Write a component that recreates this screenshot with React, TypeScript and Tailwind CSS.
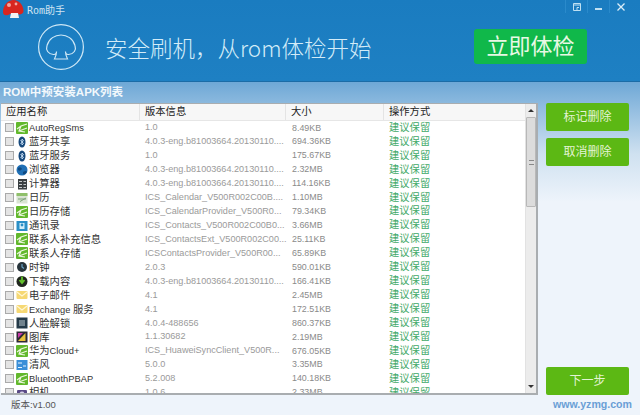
import React from "react";

type IconName =
  | "android"
  | "bluetooth"
  | "globe"
  | "calc"
  | "calendar"
  | "contacts"
  | "clock"
  | "download"
  | "mail"
  | "face"
  | "gallery"
  | "weather"
  | "camera";

interface Row {
  name: string;
  version: string;
  size: string;
  icon: IconName;
}

const rows: Row[] = [
  { name: "AutoRegSms", version: "1.0", size: "8.49KB", icon: "android" },
  { name: "蓝牙共享", version: "4.0.3-eng.b81003664.20130110....", size: "694.36KB", icon: "bluetooth" },
  { name: "蓝牙服务", version: "1.0", size: "175.67KB", icon: "bluetooth" },
  { name: "浏览器", version: "4.0.3-eng.b81003664.20130110....", size: "2.32MB", icon: "globe" },
  { name: "计算器", version: "4.0.3-eng.b81003664.20130110....", size: "114.16KB", icon: "calc" },
  { name: "日历", version: "ICS_Calendar_V500R002C00B....", size: "1.10MB", icon: "calendar" },
  { name: "日历存储", version: "ICS_CalendarProvider_V500R0...", size: "79.34KB", icon: "android" },
  { name: "通讯录", version: "ICS_Contacts_V500R002C00B0...", size: "3.66MB", icon: "contacts" },
  { name: "联系人补充信息", version: "ICS_ContactsExt_V500R002C00...", size: "25.11KB", icon: "android" },
  { name: "联系人存储", version: "ICSContactsProvider_V500R00...", size: "65.89KB", icon: "android" },
  { name: "时钟", version: "2.0.3", size: "590.01KB", icon: "clock" },
  { name: "下载内容", version: "4.0.3-eng.b81003664.20130110....", size: "166.41KB", icon: "download" },
  { name: "电子邮件", version: "4.1", size: "2.45MB", icon: "mail" },
  { name: "Exchange 服务", version: "4.1", size: "172.51KB", icon: "mail" },
  { name: "人脸解锁", version: "4.0.4-488656", size: "860.37KB", icon: "face" },
  { name: "图库", version: "1.1.30682", size: "2.19MB", icon: "gallery" },
  { name: "华为Cloud+", version: "ICS_HuaweiSyncClient_V500R...", size: "676.05KB", icon: "android" },
  { name: "清风", version: "5.0.0", size: "3.35MB", icon: "weather" },
  { name: "BluetoothPBAP", version: "5.2.008", size: "140.18KB", icon: "android" },
  { name: "相机", version: "1.0.6", size: "2.33MB", icon: "camera" },
];

const AppIcon: React.FC<{ name: IconName }> = ({ name }) => {
  const art: Record<IconName, React.ReactNode> = {
    android: (
      <>
        <rect x="0" y="0" width="12" height="12" rx="1" fill="#62b82c" />
        <path d="M1 7 L5 4 L11 2 M5 4 L3 9 L9 10 M3 9 L11 6" stroke="#eef6e0" strokeWidth="1.2" fill="none" />
      </>
    ),
    bluetooth: (
      <>
        <ellipse cx="6" cy="6" rx="3.5" ry="5.5" fill="#17497c" />
        <path d="M4.5 4 L7.5 7.5 L6 9 V3 L7.5 4.5 L4.5 8" stroke="#d8ecff" strokeWidth="0.8" fill="none" />
      </>
    ),
    globe: (
      <>
        <circle cx="6" cy="6" r="5.5" fill="#1f6fb5" />
        <path d="M2 4 Q5 2 6 5 Q4 8 2 6 Z M7 8 Q10 6 11 8 Q9 11 7 10 Z" fill="#114a80" />
      </>
    ),
    calc: (
      <>
        <rect x="2" y="1" width="9" height="10.5" fill="#3a3f42" />
        <path d="M3 3.5 H6 M7.5 3.5 H10 M3 6.5 H6 M7.5 6.5 H10 M3 9.5 H6 M7.5 9.5 H10" stroke="#c4c8ca" strokeWidth="1.2" />
      </>
    ),
    calendar: (
      <>
        <rect x="0.5" y="2" width="11" height="9.5" fill="#d9e4d3" />
        <rect x="0.5" y="1" width="11" height="3" fill="#8fc06a" />
        <path d="M2 7 H10 M4 9.5 L10 6" stroke="#7fa37a" strokeWidth="1" />
      </>
    ),
    contacts: (
      <>
        <rect x="0.5" y="1" width="11" height="10" fill="#2b8fc6" />
        <rect x="3.5" y="3" width="5" height="6" fill="#d4edf8" />
        <circle cx="6" cy="5" r="1.4" fill="#2b8fc6" />
      </>
    ),
    clock: (
      <>
        <circle cx="6" cy="6" r="5" fill="#27343b" />
        <path d="M6 3 V6 L8 7.5" stroke="#6aa2c4" strokeWidth="1.2" fill="none" />
      </>
    ),
    download: (
      <>
        <circle cx="6" cy="6.5" r="5.5" fill="#20261d" />
        <path d="M6 1.5 V7 M3.5 5 L6 8 L8.5 5" stroke="#63c22b" strokeWidth="1.8" fill="none" />
      </>
    ),
    mail: (
      <>
        <rect x="0.5" y="2" width="11" height="8" rx="1" fill="#f6d873" />
        <path d="M1 3 L6 7 L11 3" stroke="#fff7d6" strokeWidth="1.2" fill="none" />
      </>
    ),
    face: (
      <>
        <rect x="0.5" y="0.5" width="11" height="11" fill="#243a48" />
        <rect x="3" y="3" width="6" height="6" fill="#71838d" />
      </>
    ),
    gallery: (
      <>
        <rect x="0.5" y="0.5" width="11" height="11" fill="#2d2a35" />
        <path d="M2 10 L9.5 2 V10 Z" fill="#e8c23a" />
        <path d="M2 2 H7 L2 7 Z" fill="#c83aa8" />
      </>
    ),
    weather: (
      <>
        <rect x="0.5" y="1" width="11" height="10" fill="#3a8fd8" />
        <path d="M2 4 H6 M7 7 H10 M2 8.5 H6" stroke="#e8f4ff" strokeWidth="1.2" />
      </>
    ),
    camera: (
      <>
        <rect x="1" y="3" width="10" height="8" rx="1" fill="#5a4a86" />
        <circle cx="6" cy="7" r="2.4" fill="#d9d4ea" />
      </>
    ),
  };
  return (
    <svg viewBox="0 0 12 12" className="w-[12px] h-[12px] shrink-0">
      {art[name]}
    </svg>
  );
};

const Mushroom: React.FC = () => (
  <svg viewBox="0 0 46 46" className="w-[46px] h-[46px] shrink-0" fill="none" stroke="#cfe8f6" strokeWidth="1.2">
    <circle cx="23" cy="23" r="22.4" />
    <path d="M15.5 30.5 C10 30 7.5 26 9 21.5 C11 14.5 17 11 23 11 C29 11 35 14.5 37 21.5 C38.5 26 36 30 30.5 30.5 C28 30.7 27.5 29 27.5 27.5 C27.5 31 28.5 33 29.5 35 H16.5 C17.5 33 18.5 31 18.5 27.5 C18.5 29 18 30.7 15.5 30.5 Z" />
  </svg>
);

const Logo: React.FC = () => (
  <svg viewBox="0 0 22 18" className="w-[22px] h-[18px] shrink-0">
    <path d="M1 12 C1 5 6 0 11.5 0 C17 0 21.5 5 21.5 11 C21.5 14 18 15 15 14 L8 14 C5 16 1 16 1 12 Z" fill="#d8261f" />
    <circle cx="7" cy="5" r="2" fill="#f4a6a0" />
    <circle cx="14" cy="4" r="1.4" fill="#f4a6a0" />
    <path d="M9 13 H16 L17 18 H8 Z" fill="#f2f2f2" />
  </svg>
);

const GreenButton: React.FC<{ label: string }> = ({ label }) => (
  <button className="w-[83px] h-[28px] rounded-[2px] bg-[#5cb814] text-[#e4f4d4] text-[12px] flex items-center justify-center">
    {label}
  </button>
);

// latin runs are set smaller than the CJK ones in the list
const AppName: React.FC<{ text: string }> = ({ text }) => (
  <span className="whitespace-nowrap text-[10.3px]">
    {text.split(/([\x00-\x7f]+)/).map((part, i) =>
      /^[\x00-\x7f]+$/.test(part) ? (
        <span key={i} className="text-[9.3px]">
          {part}
        </span>
      ) : (
        part
      )
    )}
  </span>
);

const cjk = "font-['Liberation_Sans','Noto_Sans_CJK_SC',sans-serif]";

export default function App() {
  return (
    <div className={`w-[640px] h-[415px] overflow-hidden flex flex-col bg-[#eef4fb] ${cjk}`}>
      {/* banner */}
      <div className="h-[82px] shrink-0 flex flex-col bg-gradient-to-b from-[#1a7cc0] to-[#1e80c3] border-b border-[#1b6ca6]">
        <div className="h-[24px] shrink-0 flex items-start pl-[2px] text-[#cfe4f2]">
          <Logo />
          <span className="ml-[3px] mt-[3px] text-[10px] font-['DejaVu_Sans_Mono','Noto_Sans_CJK_SC',monospace]">
            Rom助手
          </span>
          <div className="ml-auto flex h-[13px] items-center pr-[9px]">
            <div className="w-[22px] h-full flex items-center justify-center border-l border-[#2a8acb]">
              <svg viewBox="0 0 8 8" className="w-[8px] h-[8px]" fill="none" stroke="#bfe0f2" strokeWidth="1">
                <path d="M0.5 0.5 H7.5 V7.5 H0.5 Z M0.5 2 H7.5 M4 7 V4.5 H6" />
              </svg>
            </div>
            <div className="w-[22px] h-full flex items-center justify-center border-l border-[#2a8acb]">
              <div className="w-[7px] h-[2px] bg-[#bfe0f2] mt-[4px]" />
            </div>
            <div className="w-[22px] h-full flex items-center justify-center border-l border-[#2a8acb]">
              <svg viewBox="0 0 8 8" className="w-[8px] h-[8px]" stroke="#dceef8" strokeWidth="1.3">
                <path d="M0.5 0.5 L7.5 7.5 M7.5 0.5 L0.5 7.5" />
              </svg>
            </div>
          </div>
        </div>
        <div className="flex items-center pl-[38px]">
          <Mushroom />
          <span className="ml-[21px] w-[369px] text-[22.5px] leading-[34px] text-[#d3ecf8] font-light font-['Noto_Sans_CJK_SC',sans-serif]">
            安全刷机，从rom体检开始
          </span>
          <button className="w-[113px] h-[35px] -mt-[1px] rounded-[3px] bg-[#10b84a] text-[#e8f8e4] text-[22px] leading-none flex items-center justify-center">
            立即体检
          </button>
        </div>
      </div>

      {/* list area */}
      <div className="flex-1 flex flex-col px-[1px] bg-gradient-to-b from-[#6ea8d6] via-[#cfe1f0] via-60% to-[#eef4fb] to-100% min-h-0 bg-[length:100%_120px] bg-no-repeat">
        <div className="h-[21px] shrink-0 flex items-center pl-[2px] text-[11.5px] font-bold text-[#f2f8fc]">
          ROM中预安装APK列表
        </div>
        <div className="flex gap-[8px] h-[292px] shrink-0">
          <div className="w-[537px] shrink-0 flex bg-white border-t border-r-2 border-b-2 border-[#a9adb0] overflow-hidden">
            <div className="flex-1 min-w-0 flex flex-col">
              <div className="h-[17px] shrink-0 flex items-center bg-[#f7f7f7] border-b border-[#e6e6e6] text-[10.3px] text-[#222]">
                <div className="w-[139px] pl-[5px] shrink-0 border-r border-[#e4e4e4]">应用名称</div>
                <div className="w-[146px] pl-[5px] shrink-0 border-r border-[#e4e4e4]">版本信息</div>
                <div className="w-[98px] pl-[5px] shrink-0 border-r border-[#e4e4e4]">大小</div>
                <div className="pl-[5px]">操作方式</div>
              </div>
              {rows.map((row, i) => (
                <div key={i} className="h-[13.95px] shrink-0 flex items-center leading-none">
                  <div className="w-[139px] shrink-0 pl-[4px] flex items-center text-[#333]">
                    <span className="w-[9px] h-[9px] shrink-0 bg-[#e4e4e4] border border-[#aaa] mr-[2px]" />
                    <AppIcon name={row.icon} />
                    <span className="ml-[1px] -mt-[3px]">
                      <AppName text={row.name} />
                    </span>
                  </div>
                  <div className="w-[146px] shrink-0 pl-[5px] whitespace-nowrap text-[#9a9a9a] text-[9.1px]">
                    {row.version}
                  </div>
                  <div className="w-[98px] shrink-0 pl-[6px] text-[#8a8a8a] text-[8.9px]">{row.size}</div>
                  <div className="pl-[5px] text-[#3fa968] text-[10.3px]">建议保留</div>
                </div>
              ))}
            </div>
            {/* scrollbar */}
            <div className="w-[11px] shrink-0 flex flex-col bg-[#ececec] border-l border-[#e2e2e2]">
              <div className="h-[13px] flex items-center justify-center text-[#444]">
                <div className="w-0 h-0 border-x-[3px] border-x-transparent border-b-[3px] border-b-[#333]" />
              </div>
              <div className="h-[90px] bg-[#dcdcdc] border border-[#b8b8b8] rounded-[1px] flex items-center justify-center">
                <div className="w-[5px] h-[5px] border-y border-[#888]" />
              </div>
              <div className="mt-auto h-[13px] flex items-center justify-center">
                <div className="w-0 h-0 border-x-[3px] border-x-transparent border-t-[3px] border-t-[#333]" />
              </div>
            </div>
          </div>

          <div className="flex flex-col gap-[7px] h-[292px]">
            <GreenButton label="标记删除" />
            <GreenButton label="取消删除" />
            <div className="mt-auto">
              <GreenButton label="下一步" />
            </div>
          </div>
        </div>
        <div className="flex-1 flex items-center justify-between pl-[10px] pr-[7px]">
          <span className="text-[9.5px] text-[#555]">版本:v1.00</span>
          <span className="text-[10.6px] font-bold text-[#6a9fd6]">www.yzmg.com</span>
        </div>
      </div>
    </div>
  );
}
